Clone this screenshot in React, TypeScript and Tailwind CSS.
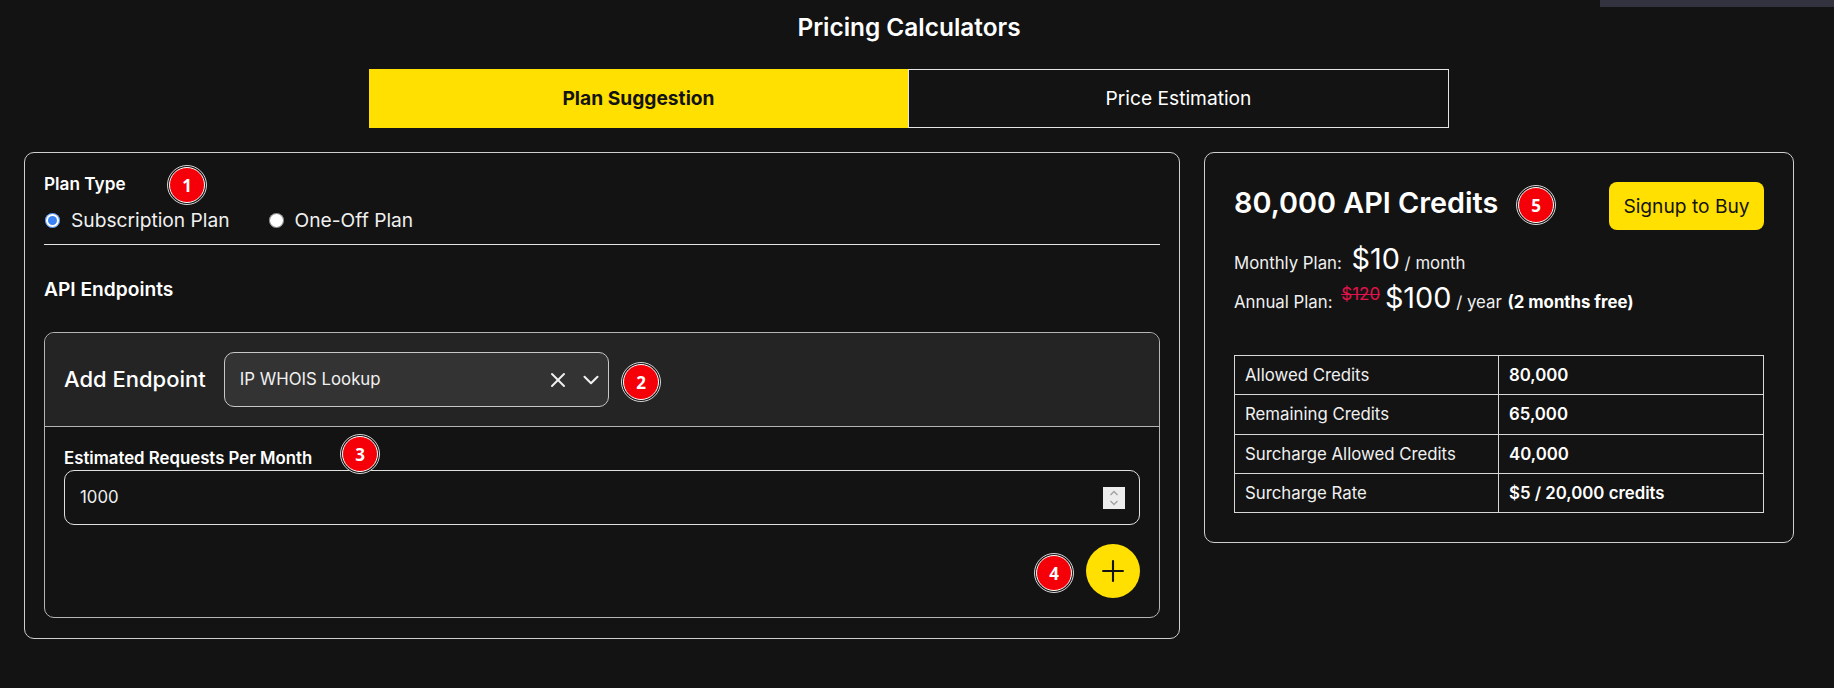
import React from "react";
import { ChevronDown, Plus, X } from "lucide-react";

const creditRows = [
  { label: "Allowed Credits", value: "80,000" },
  { label: "Remaining Credits", value: "65,000" },
  { label: "Surcharge Allowed Credits", value: "40,000" },
  { label: "Surcharge Rate", value: "$5 / 20,000 credits" },
];

function Badge({ n, className }: { n: number; className: string }) {
  return (
    <span
      className={`absolute flex h-[40px] w-[40px] items-center justify-center rounded-full border border-[#d8d8d8] bg-[#131313] p-[1px] ${className}`}
    >
      <span className="flex h-full w-full items-center justify-center rounded-full border border-white bg-[#f50008] font-['Open_Sans',sans-serif] text-[17px] font-bold leading-none text-white">
        {n}
      </span>
    </span>
  );
}

export default function App() {
  return (
    <div className="relative min-h-[688px] overflow-hidden bg-[#131313] pl-[24px] pr-[40px] pt-[11px] font-['Inter',sans-serif] text-white">
      <div className="absolute right-0 top-0 h-[7px] w-[234px] bg-[#33323f]" />

      <h1 className="h-[33px] text-center text-[24.4px] font-semibold leading-[33px]">Pricing Calculators</h1>

      <div className="mx-auto mt-[25px] flex h-[59px] w-[1080px]">
        <button className="h-full w-[539px] bg-[#ffe000] text-[19.2px] font-bold text-[#131313]">Plan Suggestion</button>
        <button className="h-full flex-1 border border-[#e5e5e5] text-[19.2px] font-normal">Price Estimation</button>
      </div>

      <div className="mt-[24px] flex items-start gap-[24px]">
        <section className="w-[1156px] rounded-[10px] border border-[#cfcfcf] px-[19px] pb-[20px] pt-[19px]">
          <div className="relative h-[24px] text-[17.2px] font-semibold leading-[24px]">
            Plan Type
            <Badge n={1} className="left-[123px] top-[-7px]" />
          </div>
          <div className="mt-[10px] flex h-[28px] items-center text-[19.2px] font-normal text-[#f0f0f0]">
            <label className="flex items-center">
              <input type="radio" name="plan" defaultChecked className="ml-[1px] h-[15px] w-[15px] accent-[#3b82f6]" />
              <span className="ml-[11px]">Subscription Plan</span>
            </label>
            <label className="ml-[39px] flex items-center">
              <input type="radio" name="plan" className="h-[15px] w-[15px]" />
              <span className="ml-[11px]">One-Off Plan</span>
            </label>
          </div>
          <hr className="mt-[10px] border-[#e5e5e5]" />
          <h2 className="mt-[30px] h-[28px] text-[19.2px] font-semibold leading-[28px]">API Endpoints</h2>

          <div className="mt-[29px] rounded-[10px] border border-[#b5b5b5]">
            <div className="relative flex h-[94px] items-center gap-[18px] rounded-t-[10px] border-b border-[#b5b5b5] bg-[#242424] px-[19px]">
              <span className="text-[22px] font-medium">Add Endpoint</span>
              <div className="flex h-[55px] w-[385px] items-center rounded-[10px] border border-[#c8c8c8] bg-[#333333] pl-[15px] pr-[4px] text-[16.8px] font-normal text-[#f0f0f0]">
                <span className="flex-1">IP WHOIS Lookup</span>
                <X size={24} strokeWidth={2} />
                <ChevronDown size={26} strokeWidth={1.9} className="ml-[8px]" />
              </div>
              <Badge n={2} className="left-[576px] top-[29px]" />
            </div>
            <div className="px-[19px] pb-[19px] pt-[19px]">
              <div className="relative h-[24px] text-[16.8px] font-semibold leading-[24px]">
                Estimated Requests Per Month
                <Badge n={3} className="left-[276px] top-[-12px]" />
              </div>
              <div className="flex h-[55px] items-center rounded-[10px] border border-[#e0e0e0] pl-[15px] pr-[14px]">
                <input
                  type="text"
                  defaultValue="1000"
                  className="min-w-0 flex-1 bg-transparent pt-[1px] text-[16.8px] font-normal text-[#f0f0f0] outline-none"
                />
                <span className="flex h-[22px] w-[22px] items-center justify-center bg-[#ececec]">
                  <svg width="12" height="18" viewBox="0 0 12 18" fill="none" stroke="#a0a0a0" strokeWidth="1.3">
                    <path d="M2.5 6 6 2.5 9.500 6" />
                    <path d="M2.500 12 6 15.500 9.500 12" />
                  </svg>
                </span>
              </div>
              <div className="relative mt-[19px] flex justify-end">
                <Badge n={4} className="right-[66px] top-[9px]" />
                <button className="flex h-[54px] w-[54px] items-center justify-center rounded-full bg-[#ffe000] text-[#131313]">
                  <Plus size={34} strokeWidth={1.5} />
                </button>
              </div>
            </div>
          </div>
        </section>

        <section className="w-[590px] rounded-[10px] border border-[#cfcfcf] px-[29px] pb-[29px] pt-[29px]">
          <div className="relative flex items-start justify-between">
            <h2 className="text-[28.8px] font-semibold leading-[42px]">80,000 API Credits</h2>
            <Badge n={5} className="left-[282px] top-[3px]" />
            <button className="h-[48px] w-[155px] rounded-[8px] bg-[#ffe000] text-[19.2px] font-normal text-[#131313]">
              Signup to Buy
            </button>
          </div>

          <div className="mt-[9px] text-[16.8px] font-normal leading-[20px] text-[#f0f0f0]">
            <div>
              Monthly Plan: <span className="ml-[5px] text-[28.8px] font-normal leading-[39px] text-white">$10</span> / month
            </div>
            <div>
              Annual Plan:{" "}
              <sup className="ml-[4px] text-[17px] text-[#e0144c] line-through">$120</sup>{" "}
              <span className="text-[28.8px] font-normal leading-[39px] text-white">$100</span> / year{" "}
              <b className="ml-[1px] font-bold text-white">(2 months free)</b>
            </div>
          </div>

          <table className="mt-[38px] w-full border-collapse text-[16.8px]">
            <tbody>
              {creditRows.map((row) => (
                <tr key={row.label} className="h-[39.3px]">
                  <td className="w-[264px] border border-[#d8d8d8] px-[10px] pb-0 pt-[1px] font-normal text-[#f0f0f0]">{row.label}</td>
                  <td className="border border-[#d8d8d8] px-[10px] pb-0 pt-[1px] font-semibold">{row.value}</td>
                </tr>
              ))}
            </tbody>
          </table>
        </section>
      </div>
    </div>
  );
}
